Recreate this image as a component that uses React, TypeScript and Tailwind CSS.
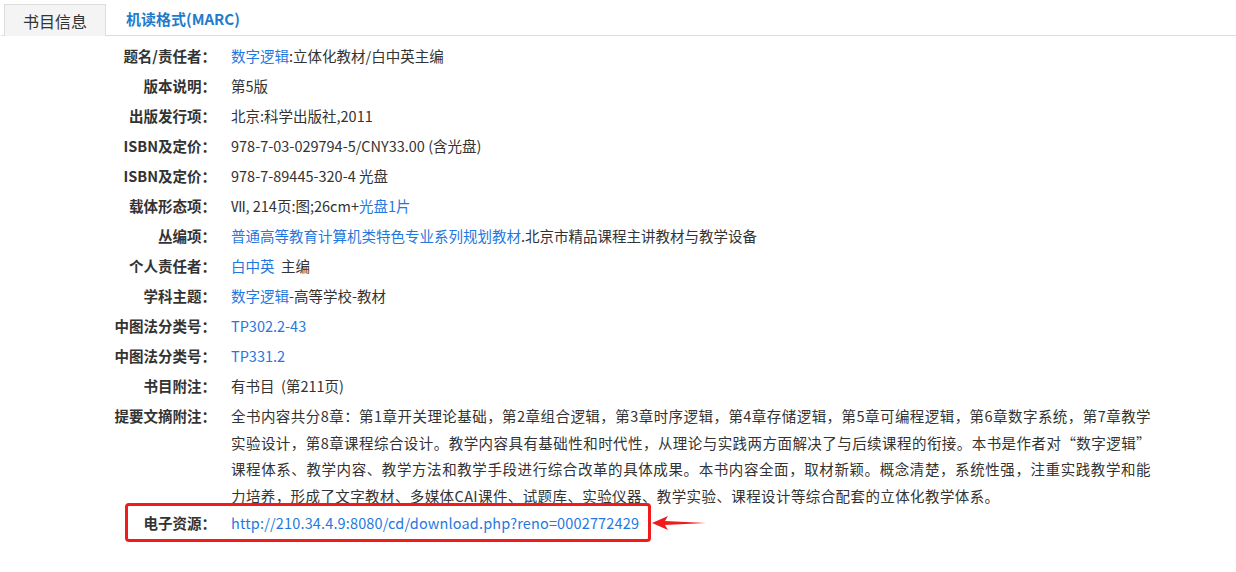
import React from 'react';

// Book detail page — "书目信息" tab with catalogue fields
type Part = { t: string; link?: boolean };

interface Field {
  label: string;
  value: Part[];
}

const fields: Field[] = [
  { label: '题名/责任者：', value: [{ t: '数字逻辑', link: true }, { t: ':立体化教材/白中英主编' }] },
  { label: '版本说明：', value: [{ t: '第5版' }] },
  { label: '出版发行项：', value: [{ t: '北京:科学出版社,2011' }] },
  { label: 'ISBN及定价：', value: [{ t: '978-7-03-029794-5/CNY33.00 (含光盘)' }] },
  { label: 'ISBN及定价：', value: [{ t: '978-7-89445-320-4 光盘' }] },
  { label: '载体形态项：', value: [{ t: 'Ⅶ, 214页:图;26cm+' }, { t: '光盘1片', link: true }] },
  {
    label: '丛编项：',
    value: [{ t: '普通高等教育计算机类特色专业系列规划教材', link: true }, { t: '.北京市精品课程主讲教材与教学设备' }],
  },
  { label: '个人责任者：', value: [{ t: '白中英', link: true }, { t: '  主编' }] },
  { label: '学科主题：', value: [{ t: '数字逻辑', link: true }, { t: '-高等学校-教材' }] },
  { label: '中图法分类号：', value: [{ t: 'TP302.2-43', link: true }] },
  { label: '中图法分类号：', value: [{ t: 'TP331.2', link: true }] },
  { label: '书目附注：', value: [{ t: '有书目  (第211页)' }] },
];

// abstract, split the way the page wraps it
const abstractLines = [
  '全书内容共分8章：第1章开关理论基础，第2章组合逻辑，第3章时序逻辑，第4章存储逻辑，第5章可编程逻辑，第6章数字系统，第7章教学',
  '实验设计，第8章课程综合设计。教学内容具有基础性和时代性，从理论与实践两方面解决了与后续课程的衔接。本书是作者对“数字逻辑”',
  '课程体系、教学内容、教学方法和教学手段进行综合改革的具体成果。本书内容全面，取材新颖。概念清楚，系统性强，注重实践教学和能',
  '力培养，形成了文字教材、多媒体CAI课件、试题库、实验仪器、教学实验、课程设计等综合配套的立体化教学体系。',
];

function Row({ label, children }: { label: string; children: React.ReactNode }) {
  return (
    <div className="flex h-[30px] items-center">
      <div className="w-[216px] shrink-0 text-right font-bold text-[#333]">{label}</div>
      <div className="pl-[15px] text-[#333] whitespace-pre">{children}</div>
    </div>
  );
}

export default function App() {
  return (
    <div
      className="w-[1236px] h-[572px] bg-white text-[14.5px] overflow-hidden"
      style={{ fontFamily: '"Noto Sans CJK SC", "Open Sans", sans-serif' }}
    >
      {/* tabs */}
      <div className="flex items-end h-[36px] pl-[3px] border-b border-[#dddddd] ml-[1px]">
        <div className="h-[32px] w-[102px] bg-[#f4f4f4] border border-b-0 border-[#dddddd] flex items-center justify-center text-[16px] text-[#333] -mb-px">
          书目信息
        </div>
        <div className="h-[32px] flex items-center pl-[20px] text-[15px] font-bold text-[#1f7ccb]">
          机读格式(MARC)
        </div>
      </div>

      <div className="pt-[5px]">
        {fields.map((f, i) => (
          <Row key={i} label={f.label}>
            {f.value.map((p, j) =>
              p.link ? (
                <a key={j} href="#" className="text-[#1f78e0]">
                  {p.t}
                </a>
              ) : (
                <span key={j}>{p.t}</span>
              ),
            )}
          </Row>
        ))}

        <div className="flex pt-[2px]">
          <div className="w-[216px] shrink-0 text-right font-bold text-[#333] leading-[26.7px]">提要文摘附注：</div>
          <div className="pl-[15px] w-[935px] text-[#333] leading-[26.7px] tracking-[0.4px]">
            {abstractLines.map((line, i) => (
              <span
                key={i}
                className={`block whitespace-nowrap ${i < abstractLines.length - 1 ? 'text-justify [text-align-last:justify]' : ''}`}
              >
                {line}
              </span>
            ))}
          </div>
        </div>

        {/* 电子资源 row with the red annotation */}
        <div className="relative flex h-[26px] items-center">
          <div className="w-[216px] shrink-0 text-right font-bold text-[#333]">电子资源：</div>
          <a href="#" className="pl-[15px] text-[#1f78e0] tracking-[0.15px]">
            http://210.34.4.9:8080/cd/download.php?reno=0002772429
          </a>
          <div className="absolute left-[125px] top-[-7px] w-[526px] h-[39px] border-[3px] border-[#f01c1c] rounded-[4px]" />
          <svg className="absolute left-[652px] top-[5px]" width="56" height="16" viewBox="0 0 56 16">
            <polygon points="0,8 16,1 13,6 54,8 13,10 16,15" fill="#f01c1c" />
          </svg>
        </div>
      </div>
    </div>
  );
}
